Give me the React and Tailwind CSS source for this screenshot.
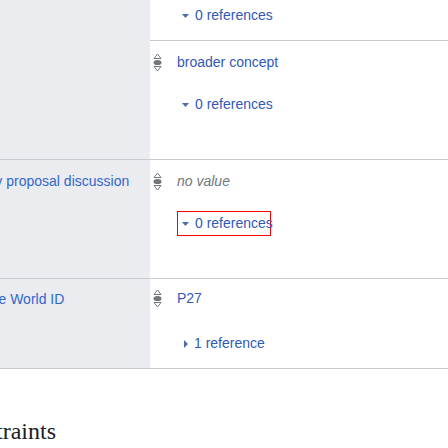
import React from 'react'

const LINK = 'text-[#3059b8]'

function RankIcon() {
  return (
    <svg width="9" height="19" viewBox="0 0 9 19" className="shrink-0">
      <path d="M4.5 1 L8 5.5 L1 5.5 Z" fill="none" stroke="#72777d" strokeWidth="1" />
      <ellipse cx="4.5" cy="9.5" rx="4" ry="2.6" fill="#72777d" />
      <path d="M1 13.5 L8 13.5 L4.5 18 Z" fill="none" stroke="#72777d" strokeWidth="1" />
    </svg>
  )
}

function Caret({ open }) {
  return open ? (
    <svg width="7" height="4" viewBox="0 0 7 4" className="shrink-0">
      <path d="M0 0 L7 0 L3.5 4 Z" fill="#4a6fa5" />
    </svg>
  ) : (
    <svg width="4" height="8" viewBox="0 0 4 8" className="shrink-0">
      <path d="M0 0 L4 4 L0 8 Z" fill="#4a6fa5" />
    </svg>
  )
}

function Refs({ count, open = true, boxed = false }) {
  const label = count === 1 ? '1 reference' : `${count} references`
  return (
    <div
      className={`flex h-[25px] w-[94px] items-center gap-[6px] whitespace-nowrap pl-[4px] ${
        boxed ? 'border border-[#ff0000]' : 'border border-transparent'
      } ${open ? '' : 'pl-[6px] gap-[6px]'}`}
    >
      <Caret open={open} />
      <span className={`text-[14px] ${LINK}`}>{label}</span>
    </div>
  )
}

function ValueRow({ children }) {
  return (
    <div className="flex h-[22px] items-center pl-[3px]">
      <RankIcon />
      <div className="ml-[15px] text-[14px]">{children}</div>
    </div>
  )
}

export default function App() {
  return (
    <div className="h-[448px] w-[448px] overflow-hidden bg-white font-['Liberation_Sans',Arial,sans-serif]">
      {/* group: broader concept (label scrolled above) */}
      <div className="flex border-b border-[#c8ccd1]">
        <div className="w-[150px] shrink-0 bg-[#eaecf0]" />
        <div className="flex-1">
          <div className="h-[41px] border-b border-[#c8ccd1] pl-[27px] pt-[3px]">
            <Refs count={0} />
          </div>
          <div className="h-[118px] pt-[10px]">
            <ValueRow>
              <span className={LINK}>broader concept</span>
            </ValueRow>
            <div className="mt-[19px] pl-[27px]">
              <Refs count={0} />
            </div>
          </div>
        </div>
      </div>

      {/* group: property proposal discussion */}
      <div className="flex h-[119px] border-b border-[#c8ccd1]">
        <div className="w-[150px] shrink-0 overflow-hidden bg-[#eaecf0] pt-[10px]">
          <div className="-ml-[49px] flex h-[22px] items-center whitespace-nowrap text-[14px] text-[#3366cc]">
            property proposal discussion
          </div>
        </div>
        <div className="flex-1 pt-[10px]">
          <ValueRow>
            <span className="italic text-[#72777d]">no value</span>
          </ValueRow>
          <div className="mt-[19px] pl-[27px]">
            <Refs count={0} boxed />
          </div>
        </div>
      </div>

      {/* group: ... World ID */}
      <div className="flex h-[90px] border-b border-[#c8ccd1]">
        <div className="w-[150px] shrink-0 overflow-hidden bg-[#eaecf0] pt-[9px]">
          <div className="-ml-[49px] flex h-[22px] items-center whitespace-nowrap text-[14px] text-[#3366cc]">
            Univers<span>e World ID</span>
          </div>
        </div>
        <div className="flex-1 pt-[8px]">
          <ValueRow>
            <span className={LINK}>P27</span>
          </ValueRow>
          <div className="mt-[22px] pl-[27px]">
            <Refs count={1} open={false} />
          </div>
        </div>
      </div>

      <div className="mt-[46px] flex w-[56px] justify-end overflow-hidden">
        <h2 className="shrink-0 whitespace-nowrap font-['Liberation_Serif',Georgia,serif] text-[24px] leading-[32px] text-[#202122]">
          Property constraints
        </h2>
      </div>
    </div>
  )
}
